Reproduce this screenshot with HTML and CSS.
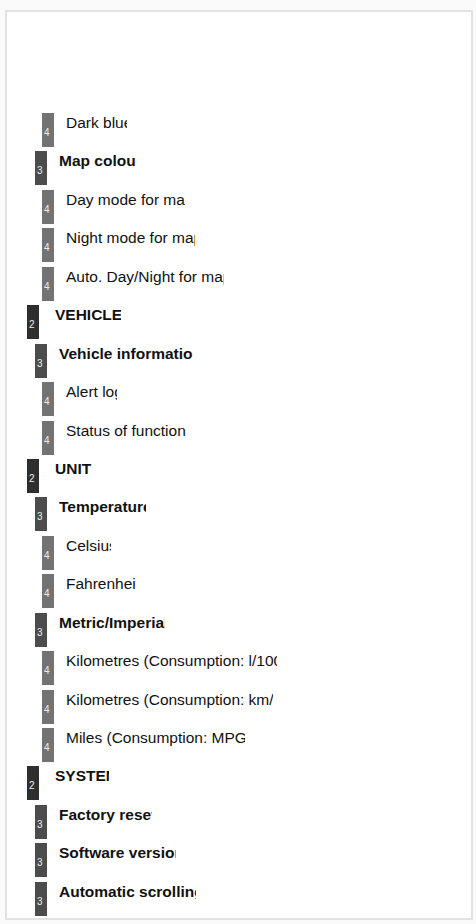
FILE: index.html
```html
<!DOCTYPE html>
<html lang="en">
<head>
    <meta charset="UTF-8">
    <meta name="viewport" content="width=device-width, initial-scale=1.0">
    <title>Menu tree</title>
    <link rel="stylesheet" href="styles.css">
</head>
<body>
<div id="page">
    <ul class="tree">
        <li class="lv4"><i>4</i><span style="width:61px">Dark blue</span></li>
        <li class="lv3"><i>3</i><span style="width:77px">Map colour</span></li>
        <li class="lv4"><i>4</i><span style="width:119px">Day mode for map</span></li>
        <li class="lv4"><i>4</i><span style="width:129px">Night mode for map</span></li>
        <li class="lv4"><i>4</i><span style="width:158px">Auto. Day/Night for map</span></li>
        <li class="lv2"><i>2</i><span style="width:66px">VEHICLE</span></li>
        <li class="lv3"><i>3</i><span style="width:134px">Vehicle information</span></li>
        <li class="lv4"><i>4</i><span style="width:51px">Alert log</span></li>
        <li class="lv4"><i>4</i><span style="width:120px">Status of function</span></li>
        <li class="lv2"><i>2</i><span style="width:37px">UNIT</span></li>
        <li class="lv3"><i>3</i><span style="width:87px">Temperature</span></li>
        <li class="lv4"><i>4</i><span style="width:45px">Celsius</span></li>
        <li class="lv4"><i>4</i><span style="width:70px">Fahrenheit</span></li>
        <li class="lv3"><i>3</i><span style="width:106px">Metric/Imperial</span></li>
        <li class="lv4"><i>4</i><span style="width:211px">Kilometres (Consumption: l/100 km)</span></li>
        <li class="lv4"><i>4</i><span style="width:207px">Kilometres (Consumption: km/l)</span></li>
        <li class="lv4"><i>4</i><span style="width:179px">Miles (Consumption: MPG)</span></li>
        <li class="lv2"><i>2</i><span style="width:54px">SYSTEM</span></li>
        <li class="lv3"><i>3</i><span style="width:93px">Factory reset</span></li>
        <li class="lv3"><i>3</i><span style="width:117px">Software version</span></li>
        <li class="lv3"><i>3</i><span style="width:137px">Automatic scrolling</span></li>
    </ul>
</div>
</body>
</html>
```

FILE: styles.css
```css
html {
    background: #fafafa;
}
body {
    margin: 0;
    font-family: "Liberation Sans", Arial, sans-serif;
    color: #111;
}
#page {
    margin: 10px 3px 0 5px;
    height: 910px;
    box-sizing: border-box;
    border: 2px solid #e2e2e2;
    background: #fff;
    padding-top: 101px;
    overflow: hidden;
}
.tree {
    margin: 0;
    padding: 0;
    list-style: none;
    display: flex;
    flex-direction: column;
    gap: 4.45px;
}
.tree li {
    display: flex;
    align-items: flex-start;
    height: 34px;
}
.tree i {
    flex: none;
    width: 12px;
    height: 34px;
    font: 10px/34px "Liberation Sans", Arial, sans-serif;
    font-style: normal;
    color: #eee;
    text-indent: 2px;
    padding-top: 3px;
    box-sizing: border-box;
}
.tree span {
    display: block;
    white-space: nowrap;
    overflow: hidden;
    font-size: 15.5px;
    line-height: 18px;
    padding-top: 1px;
}
.lv2 {
    padding-left: 20px;
}
.lv2 i {
    background: #2e2e2e;
}
.lv2 span {
    margin-left: 16px;
    font-weight: bold;
}
.lv3 {
    padding-left: 28px;
}
.lv3 i {
    background: #4c4c4c;
}
.lv3 span {
    margin-left: 12px;
    font-weight: bold;
}
.lv4 {
    padding-left: 35px;
}
.lv4 i {
    background: #737373;
}
.lv4 span {
    margin-left: 12px;
}
```
